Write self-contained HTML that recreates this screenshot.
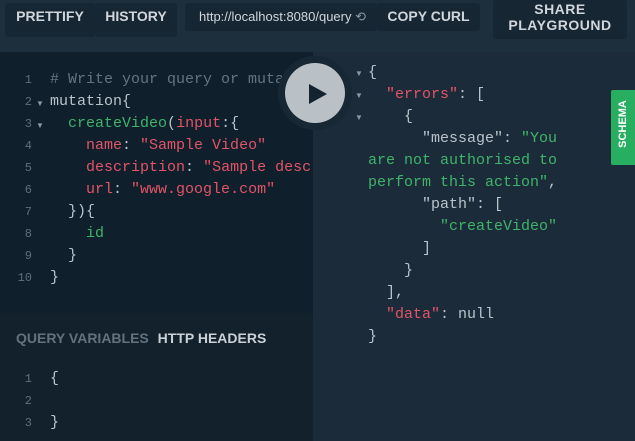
<!DOCTYPE html>
<html><head><style>
body{margin:0;width:635px;height:441px;background:#1c2b3a;position:relative;overflow:hidden;font-family:"Liberation Sans",sans-serif}
.top{position:absolute;left:0;top:0;width:635px;height:52px;background:#1d2e3d}
.btn{position:absolute;background:#172633;color:#d0d6db;font-weight:bold;font-size:14px;text-align:center;border-radius:3px}
.ed{position:absolute;left:0;top:52px;width:313px;height:261px;background:#0f1f2b}
.bot{position:absolute;left:0;top:313px;width:313px;height:128px;background:#13212c}
.m{position:absolute;font-family:"Liberation Mono",monospace;font-size:15px;white-space:pre;line-height:22px}
.n{color:#5f6f7a;font-size:12px;text-align:right;width:32px;left:0}
.c{color:#b9c3ca}.g{color:#3eb46a}.r{color:#e25468}.gr{color:#66747e}
.ar{position:absolute;color:#8a98a2;font-size:8px}
.clip{position:absolute;left:0;top:52px;width:313px;height:261px;overflow:hidden}
</style></head><body>
<div class="top"></div>
<div class="btn" style="left:5px;top:3px;width:90px;height:34px;line-height:26px">PRETTIFY</div>
<div class="btn" style="left:95px;top:3px;width:82px;height:34px;line-height:26px">HISTORY</div>
<div class="btn" style="left:185px;top:3px;width:192px;height:28px;line-height:28px;font-weight:normal;font-size:13px;text-align:left;padding-left:14px;box-sizing:border-box">http://localhost:8080/query <span style="color:#8a98a2">⟲</span></div>
<div class="btn" style="left:377px;top:3px;width:103px;height:28px;line-height:27px">COPY CURL</div>
<div class="btn" style="left:493px;top:0;width:134px;height:38px;line-height:16px;padding-top:1px;letter-spacing:0.5px">SHARE<br>PLAYGROUND</div>
<div class="ed"></div>
<div class="bot"></div>
<div class="m n" style="top:69px">1<br>2<br>3<br>4<br>5<br>6<br>7<br>8<br>9<br>10</div>
<div class="ar" style="left:36px;top:99px">▼</div><div class="ar" style="left:36px;top:121px">▼</div>
<div class="clip"><div class="m c" style="left:50px;top:17px"><span class="gr"># Write your query or muta</span>
mutation{
  <span class="g">createVideo</span>(<span class="r">input</span>:{
    <span class="r">name</span>: <span class="r">"Sample Video"</span>
    <span class="r">description</span>: <span class="r">"Sample descr</span>
    <span class="r">url</span>: <span class="r">"www.google.com"</span>
  }){
    <span class="g">id</span>
  }
}</div></div>
<div style="position:absolute;left:16px;top:330px;font-size:14px;font-weight:bold;color:#63727d">QUERY VARIABLES <span style="color:#c9d1d7;margin-left:5px">HTTP HEADERS</span></div>
<div class="m n" style="top:368px">1<br>2<br>3</div>
<div class="m c" style="left:50px;top:368px">{

}</div>
<div style="position:absolute;left:278px;top:56px;width:74px;height:74px;border-radius:50%;background:#172734"></div>
<div style="position:absolute;left:285px;top:63px;width:60px;height:60px;border-radius:50%;background:#b9c1c6"></div>
<div style="position:absolute;left:309px;top:84px;width:0;height:0;border-left:18px solid #152230;border-top:10px solid transparent;border-bottom:10px solid transparent"></div>
<div class="ar" style="left:355px;top:69px">▼</div><div class="ar" style="left:355px;top:91px">▼</div><div class="ar" style="left:355px;top:113px">▼</div>
<div class="m c" style="left:368px;top:62px">{
  <span class="r">"errors"</span>: [
    {
      "message": <span class="g">"You</span>
<span class="g">are not authorised to</span>
<span class="g">perform this action"</span>,
      "path": [
        <span class="g">"createVideo"</span>
      ]
    }
  ],
  <span class="r">"data"</span>: null
}</div>
<div style="position:absolute;left:611px;top:90px;width:24px;height:75px;background:#27ae60;border-radius:2px 0 0 2px"><div style="position:absolute;left:-26px;top:28px;width:76px;transform:rotate(-90deg);color:#fff;font-size:11px;font-weight:bold;text-align:center">SCHEMA</div></div>
</body></html>
